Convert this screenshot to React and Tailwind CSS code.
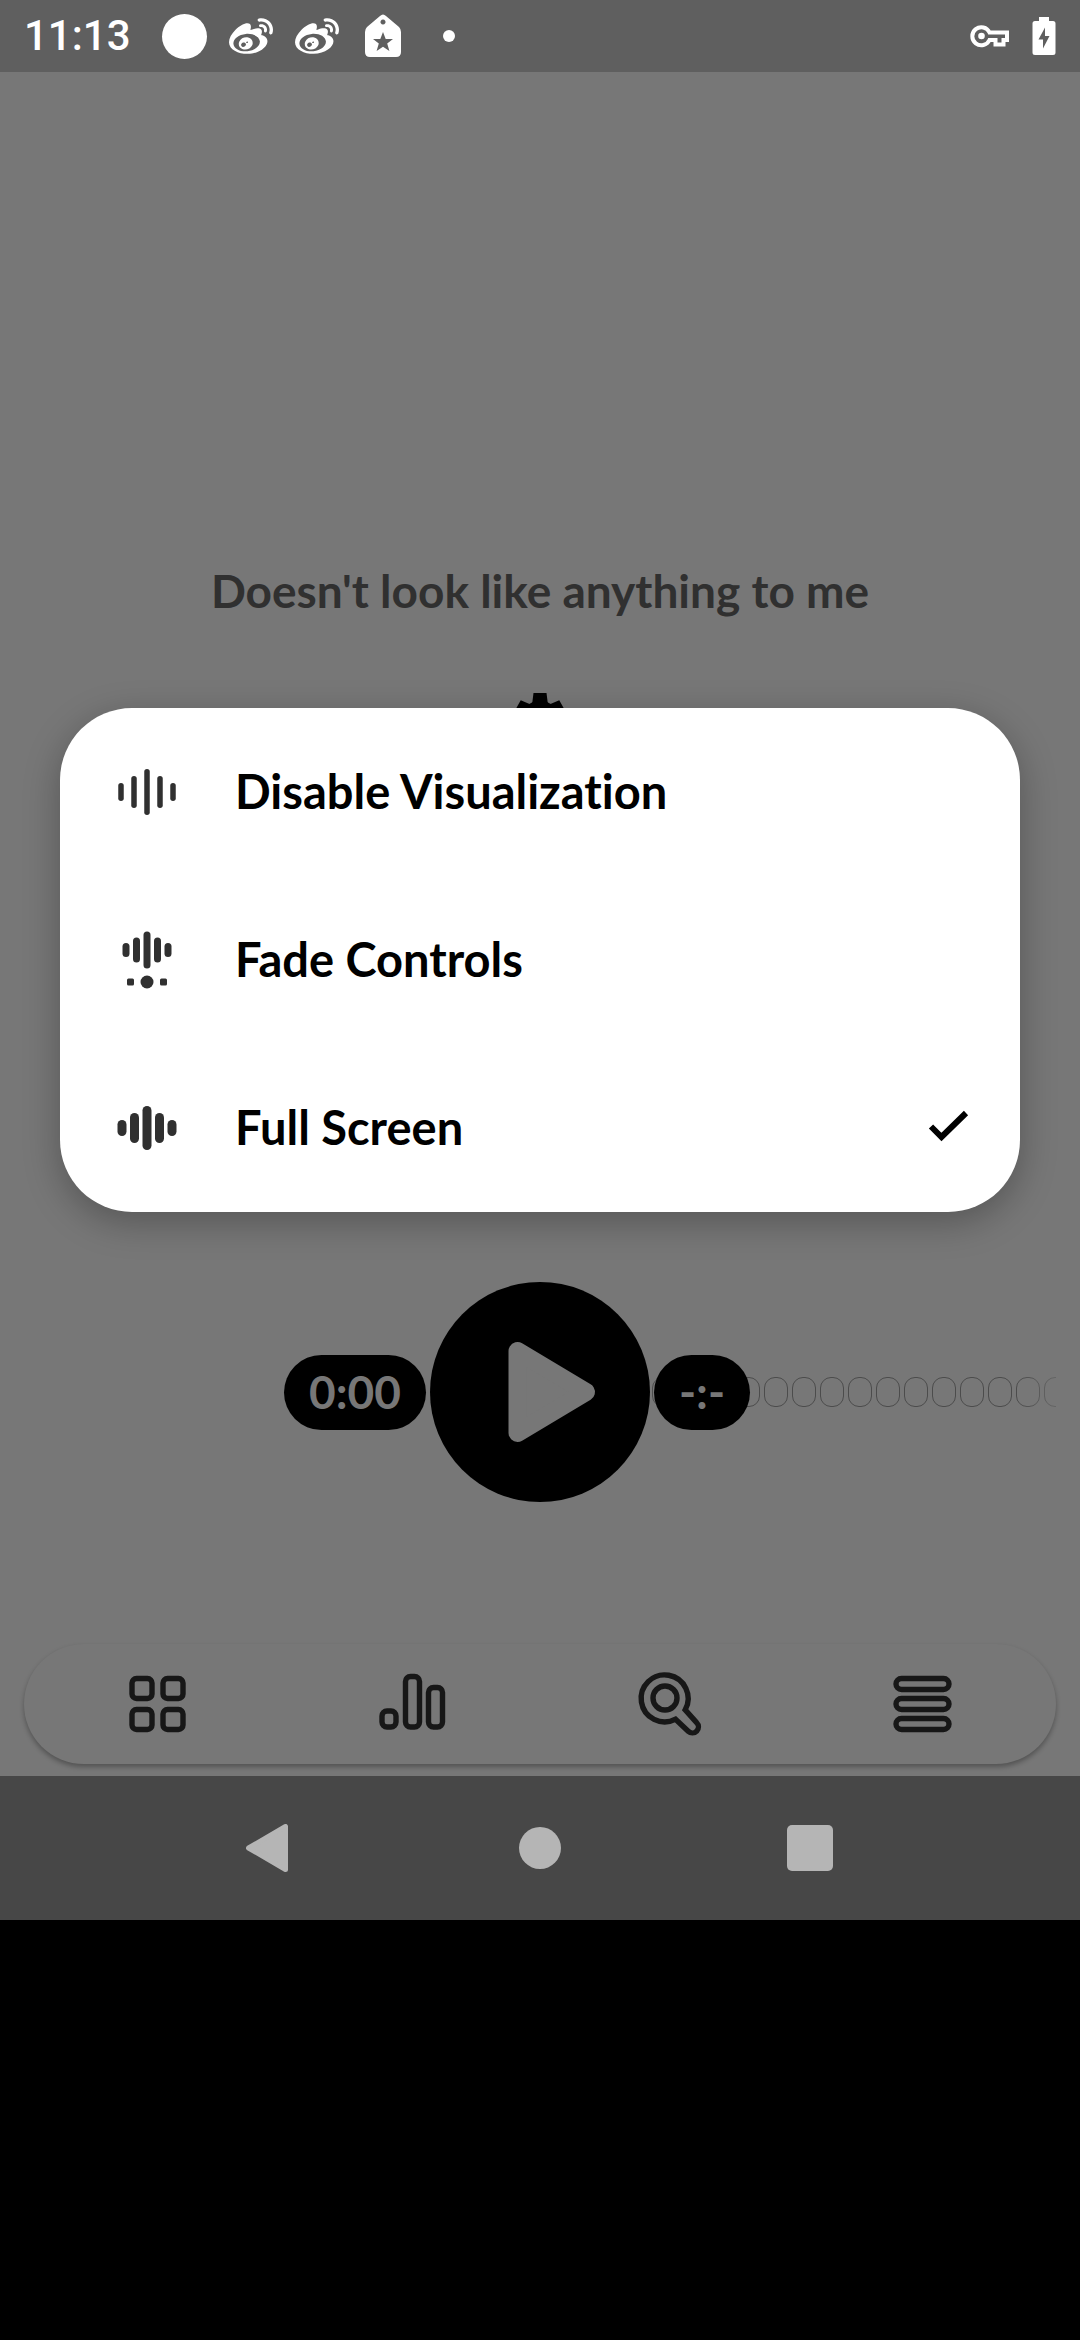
import { SiSinaweibo } from "react-icons/si";

const FONT = "font-['Lato','Open_Sans',sans-serif] [font-variant-ligatures:none]";

function TagIcon() {
  return (
    <svg className="h-[44px] w-[36px]" viewBox="0 0 36 44" fill="#fff" fillRule="evenodd">
      <path d="M15 2Q18 -1 21 2L34 13Q36 15 36 18V38Q36 43 31 43H5Q0 43 0 38V18Q0 15 2 13ZM18 5.500a2.500 2.500 0 1 0 .01 0ZM18 18l-2.700 7h-7.300l5.800 4.600-2.200 7.400 6.400-4.300 6.400 4.300-2.200-7.400 5.800-4.600h-7.300Z" />
    </svg>
  );
}

function KeyIcon() {
  return (
    <svg className="h-[24px] w-[40px]" viewBox="0 0 40 24" fill="none" stroke="#fff" strokeWidth="4">
      <path d="M19.500 8.500H37V16H33.500V20.500H25.500V16H19.500A9 9 0 1 1 19.500 8.500Z" />
      <circle cx="11.500" cy="12" r="3.300" fill="#fff" stroke="none" />
    </svg>
  );
}

function BatteryIcon() {
  return (
    <svg className="h-[40px] w-[24px]" viewBox="0 0 24 40" fill="#fff" fillRule="evenodd">
      <path d="M7 1h10v4h4q2.500 0 2.500 2.500v29q0 2.500-2.500 2.500h-18q-2.500 0-2.500-2.500v-29q0-2.500 2.500-2.500h4ZM13 11.500 6.500 23.500h4.500v9l6.500-12.500h-4.500Z" />
    </svg>
  );
}

function Bars({ bars, width }) {
  return bars.map(([x, cy, h]) => (
    <rect key={x} x={x - width / 2} y={cy - h / 2} width={width} height={h} rx={width / 2} />
  ));
}

function ThinWave() {
  return (
    <svg className="size-[60px]" viewBox="0 0 60 60" fill="#303030">
      <Bars width={5.5} bars={[[4, 30, 18], [17, 30, 32], [30, 30, 46], [43, 30, 32], [56, 30, 18]]} />
    </svg>
  );
}

function FadeWave() {
  return (
    <svg className="size-[60px]" viewBox="0 0 60 60" fill="#303030">
      <Bars width={7} bars={[[9, 20, 14], [19.5, 20, 25], [30, 20, 37], [40.5, 20, 25], [51, 20, 14]]} />
      <circle cx="30" cy="52" r="6.500" />
      <rect x="10" y="48.500" width="7" height="7" rx="1.500" />
      <rect x="43" y="48.500" width="7" height="7" rx="1.500" />
    </svg>
  );
}

function ThickWave() {
  return (
    <svg className="size-[60px]" viewBox="0 0 60 60" fill="#303030">
      <Bars width={9} bars={[[5, 30, 16], [17.5, 30, 30], [30, 30, 44], [42.5, 30, 30], [55, 30, 16]]} />
    </svg>
  );
}

const options = [
  { label: "Disable Visualization", Icon: ThinWave },
  { label: "Fade Controls", Icon: FadeWave },
  { label: "Full Screen", Icon: ThickWave, checked: true },
];

const tabStroke = { fill: "none", stroke: "#171717", strokeWidth: 5.4 };

const tabs = [
  {
    label: "Library",
    art: (
      <>
        <rect x="6" y="6.500" width="20" height="20" rx="4.500" />
        <rect x="37" y="6.500" width="20" height="20" rx="4.500" />
        <rect x="6" y="37.500" width="20" height="20" rx="4.500" />
        <rect x="37" y="37.500" width="20" height="20" rx="4.500" />
      </>
    ),
  },
  {
    label: "Equalizer",
    art: (
      <>
        <rect x="1" y="39" width="14" height="16" rx="5" />
        <rect x="24.500" y="4.500" width="14" height="50.500" rx="5" />
        <rect x="47.500" y="15.500" width="14" height="39.500" rx="5" />
      </>
    ),
  },
  {
    label: "Search",
    art: (
      <>
        <path d="M37.600 48.200A23.500 23.500 0 1 1 47.200 38.800L58.600 51.600A6 6 0 0 1 50.200 60.200Z" strokeLinejoin="miter" />
        <circle cx="27" cy="27" r="12" />
      </>
    ),
    viewBox: "-2 1 64 64",
  },
  {
    label: "Queue",
    art: (
      <>
        <rect x="5" y="6.500" width="53" height="11" rx="5.500" />
        <rect x="5" y="26.500" width="53" height="11" rx="5.500" />
        <rect x="5" y="46.500" width="53" height="11" rx="5.500" />
      </>
    ),
  },
];

const segments = Array.from({ length: 15 }, (_, i) => i);

export default function App() {
  return (
    <div className={`flex min-h-screen flex-col bg-black ${FONT}`}>
      <header className="flex h-[72px] items-center justify-between bg-[#5f5f5f] px-6 text-white">
        <div className="flex items-center">
          <time className="w-[138px] font-['Roboto',sans-serif] text-[42px] leading-none font-medium">11:13</time>
          <span className="size-[45px] rounded-full bg-white" />
          <SiSinaweibo className="ml-[22px] size-[44px]" />
          <SiSinaweibo className="ml-[22px] size-[44px]" />
          <span className="ml-[26px]"><TagIcon /></span>
          <span className="ml-[42px] size-3 rounded-full bg-white" />
        </div>
        <div className="flex items-center gap-[22px]">
          <KeyIcon />
          <BatteryIcon />
        </div>
      </header>

      <main className="relative flex h-[1704px] flex-col bg-[#777777]">
        <h1 className="mt-[489px] text-center text-[46px] leading-[60px] font-bold text-[#303030]">
          Doesn't look like anything to me
        </h1>
        <button type="button" aria-label="Settings" className="mt-[72px] self-center">
          <svg className="size-[52px]" viewBox="0 0 52 52" fill="#000">
            {[0, 60, 120, 180, 240, 300].map((a) => (
              <path key={a} d="M19.500 0H32.500L34 12H18Z" transform={`rotate(${a} 26 26)`} />
            ))}
            <circle cx="26" cy="26" r="18.500" />
          </svg>
        </button>

        <section className="mt-[537px] grid grid-cols-[1fr_auto_1fr] items-center">
          <div className="flex justify-end pr-1">
            <time className="flex h-[75px] w-[142px] items-center justify-center rounded-full bg-black pb-[2px] text-[46px] font-bold text-[#777777]">0:00</time>
          </div>
          <button type="button" aria-label="Play" className="size-[220px] rounded-full bg-black">
            <svg className="size-full" viewBox="0 0 220 220" fill="#777777" stroke="#777777" strokeWidth="18" strokeLinejoin="round">
              <path d="M87.500 69V151L156 110Z" />
            </svg>
          </button>
          <div className="relative flex pl-1">
            <div className="absolute inset-y-0 right-6 left-[2px] flex items-center gap-1 overflow-hidden [mask-image:linear-gradient(to_right,black_90%,#0006)]">
              {segments.map((i) => (
                <span key={i} className="h-[30px] w-6 shrink-0 rounded-[11px] border border-[#4c4c4c]" />
              ))}
            </div>
            <time className="relative flex h-[75px] w-24 items-center justify-center rounded-full bg-black pb-[2px] text-[46px] font-bold text-[#777777]">-:-</time>
          </div>
        </section>

        <nav className="mx-6 mt-auto mb-3 grid h-[120px] grid-cols-4 rounded-full bg-[#777777] px-[6px] shadow-[0_3px_5px_rgba(0,0,0,0.3)]">
          {tabs.map(({ label, art, viewBox }) => (
            <button key={label} type="button" aria-label={label} className="flex items-center justify-center">
              <svg className="size-16 overflow-visible" viewBox={viewBox ?? "0 0 64 64"} {...tabStroke}>{art}</svg>
            </button>
          ))}
        </nav>

        <div role="menu" className="absolute inset-x-[60px] top-[636px] rounded-[72px] bg-white shadow-[0_10px_36px_rgba(0,0,0,0.28)]">
          {options.map(({ label, Icon, checked }) => (
            <button key={label} type="button" role="menuitemradio" aria-checked={!!checked} className="flex h-[168px] w-full items-center pr-12 pl-[57px] text-left text-[47px] font-bold text-black">
              <Icon />
              <span className="ml-[58px] grow pb-[2px]">{label}</span>
              {checked && (
                <svg className="size-12" viewBox="0 0 48 48" fill="none" stroke="#000" strokeWidth="6">
                  <path d="M7 22.500 17.500 33 42 9" />
                </svg>
              )}
            </button>
          ))}
        </div>
      </main>

      <nav className="flex h-[144px] items-center justify-center bg-[#474747]">
        <button type="button" aria-label="Back" className="flex w-1/4 justify-center">
          <svg className="size-12" viewBox="0 0 48 48" fill="#b5b5b5" stroke="#b5b5b5" strokeWidth="5" strokeLinejoin="round">
            <path d="M2.500 24 39.500 2.500V45.500Z" />
          </svg>
        </button>
        <button type="button" aria-label="Home" className="flex w-1/4 justify-center">
          <span className="size-[42px] rounded-full bg-[#b5b5b5]" />
        </button>
        <button type="button" aria-label="Recents" className="flex w-1/4 justify-center">
          <span className="size-[46px] rounded-[5px] bg-[#b5b5b5]" />
        </button>
      </nav>
    </div>
  );
}
